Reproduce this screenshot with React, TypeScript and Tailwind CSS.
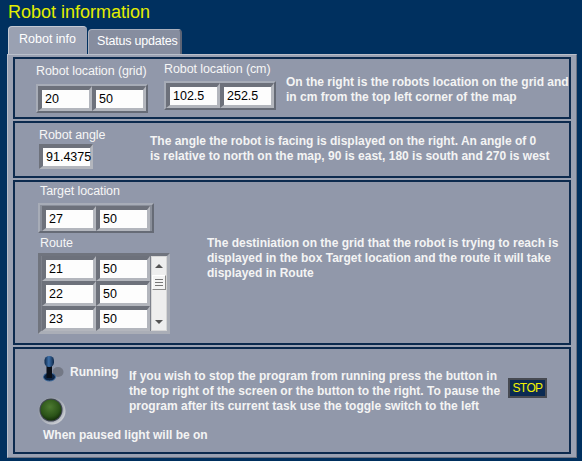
import React from "react";

// LabVIEW-ish front panel: "Robot information"

const NAVY = "bg-[#00305f]";

function Field({ value }: { value: string }) {
  return (
    <div className="border-t-4 border-l-4 border-r-[3px] border-b-[3px] border-t-[#6d717b] border-l-[#6d717b] border-r-[#b3b6bd] border-b-[#b3b6bd]">
      <div className="w-[47px] h-[18px] bg-[#fdfdfd] pl-[3px] text-[12.5px] leading-[18px] text-black">
        {value}
      </div>
    </div>
  );
}

function Cluster({ a, b, className = "" }: { a: string; b: string; className?: string }) {
  return (
    <div
      className={`flex w-fit border-2 border-t-[#a7acb7] border-l-[#a7acb7] border-r-[#666b76] border-b-[#666b76] bg-[#8a8f9a] ${className}`}
    >
      <Field value={a} />
      <Field value={b} />
    </div>
  );
}

function Label({ children, className = "" }: { children: React.ReactNode; className?: string }) {
  return <div className={`text-[12.5px] leading-[15px] tracking-[-0.1px] text-[#f6f6f6] ${className}`}>{children}</div>;
}

function Note({ children, className = "" }: { children: React.ReactNode; className?: string }) {
  return <p className={`text-[12px] leading-[15px] font-bold text-[#f4f4f4] ${className}`}>{children}</p>;
}

function Scrollbar() {
  return (
    <div className="flex h-[75px] w-[16px] flex-col items-center border border-[#d6d6d6] bg-[#eeeeee]">
      <svg width="8" height="5" viewBox="0 0 8 5" className="mt-[7px]">
        <path d="M0 4 L4 0 L8 4 Z" fill="#555" />
      </svg>
      <div className="mt-[6px] flex h-[15px] w-[14px] flex-col items-center justify-center gap-[2px] border border-t-white border-l-white border-r-[#8a8a8a] border-b-[#8a8a8a] bg-[#f4f4f4]">
        <div className="h-px w-[8px] bg-[#777]" />
        <div className="h-px w-[8px] bg-[#777]" />
        <div className="h-px w-[8px] bg-[#777]" />
      </div>
      <svg width="8" height="5" viewBox="0 0 8 5" className="mt-auto mb-[6px]">
        <path d="M0 1 L8 1 L4 5 Z" fill="#555" />
      </svg>
    </div>
  );
}

function Toggle() {
  return (
    <svg width="21" height="27" viewBox="0 0 21 27">
      <defs>
        <linearGradient id="knob" x1="0" y1="0" x2="1" y2="0">
          <stop offset="0" stopColor="#0d2748" />
          <stop offset="0.45" stopColor="#3d6fa8" />
          <stop offset="1" stopColor="#0d2748" />
        </linearGradient>
      </defs>
      <ellipse cx="15" cy="17" rx="5.5" ry="5" fill="#6c717c" opacity="0.8" />
      <ellipse cx="6.5" cy="22" rx="6" ry="4" fill="#0c2444" stroke="#3e6a9c" strokeWidth="1" />
      <rect x="3.5" y="10" width="5.5" height="13" fill="#0a0f18" />
      <rect x="1.5" y="1" width="9.5" height="11" rx="4.5" fill="url(#knob)" />
    </svg>
  );
}

function Led() {
  return (
    <svg width="28" height="28" viewBox="0 0 28 28">
      <defs>
        <radialGradient id="ring" cx="0.4" cy="0.4" r="0.6">
          <stop offset="0.75" stopColor="#9aa0ab" />
          <stop offset="1" stopColor="#c9ccd2" />
        </radialGradient>
        <radialGradient id="lamp" cx="0.45" cy="0.35" r="0.65">
          <stop offset="0" stopColor="#4d7a31" />
          <stop offset="0.7" stopColor="#2b5418" />
          <stop offset="1" stopColor="#15300b" />
        </radialGradient>
      </defs>
      <circle cx="14" cy="14" r="13.5" fill="url(#ring)" />
      <circle cx="13" cy="13" r="11.5" fill="#3f4550" />
      <circle cx="13" cy="13" r="10.5" fill="url(#lamp)" />
    </svg>
  );
}

export default function App() {
  return (
    <div className={`h-[461px] w-[582px] overflow-hidden ${NAVY} font-['Liberation_Sans',Arial,sans-serif] text-white`}>
      <h1 className="h-[26px] pl-[8px] pt-[1px] text-[18px] leading-[22px] text-[#e2ee00]">Robot information</h1>

      {/* Tabs */}
      <div className="flex h-[28px] items-end pl-[8px]">
        <div className="h-[28px] w-[79px] whitespace-nowrap rounded-t-[4px] border-t border-l border-[#c4c9d3] bg-[#9aa1b2] pl-[10px] pt-[4px] text-[12.5px] leading-[16px]">
          Robot info
        </div>
        <div className="ml-px h-[25px] w-[94px] whitespace-nowrap rounded-t-[4px] border-t border-l border-r-2 border-t-[#aab0bd] border-l-[#aab0bd] border-r-[#5d6475] bg-[#868d9f] pl-[8px] pt-[3px] text-[12.5px] leading-[16px] tracking-[-0.2px]">
          Status updates
        </div>
      </div>

      {/* Tab page */}
      <div className="ml-[7px] flex h-[404px] w-[570px] flex-col gap-[2px] border border-t-[#b9bfcb] border-l-[#b9bfcb] border-r-[#6c7384] border-b-[#6c7384] bg-[#9aa1b2] px-[5px] pt-[2px] pb-[3px]">
        {/* Location */}
        <section className="flex h-[62px] border-2 border-[#0c2a4e] bg-[#9198aa] pl-[21px]">
          <div className="pt-[5px]">
            <Label>Robot location (grid)</Label>
            <Cluster a="20" b="50" className="mt-[5px]" />
          </div>
          <div className="ml-[16px] pt-[3px]">
            <Label>Robot location (cm)</Label>
            <Cluster a="102.5" b="252.5" className="mt-[4px]" />
          </div>
          <Note className="ml-[10px] mt-[16px]">
            On the right is the robots location on the grid and
            <br />
            in cm from the top left corner of the map
          </Note>
        </section>

        {/* Angle */}
        <section className="flex h-[57px] border-2 border-[#0c2a4e] bg-[#9198aa]">
          <div className="w-[135px] pl-[24px] pt-[5px]">
            <Label>Robot angle</Label>
            <div className="mt-px w-fit">
              <Field value="91.4375" />
            </div>
          </div>
          <Note className="mt-[11px]">
            The angle the robot is facing is displayed on the right. An angle of 0
            <br />
            is relative to north on the map, 90 is east, 180 is south and 270 is west
          </Note>
        </section>

        {/* Target + route */}
        <section className="flex h-[165px] border-2 border-[#0c2a4e] bg-[#9198aa]">
          <div className="w-[192px] pl-[23px] pt-[2px]">
            <Label className="pl-[2px]">Target location</Label>
            <Cluster a="27" b="50" className="mt-[4px] px-[2px] pt-px" />
            <Label className="mt-[3px] pl-[2px]">Route</Label>
            <div className="mt-[2px] flex w-fit border-[3px] border-t-[#70747e] border-l-[#70747e] border-r-[#aaaeb7] border-b-[#aaaeb7] bg-[#8a8f9a]">
              <div className="flex flex-col">
                {[
                  ["21", "50"],
                  ["22", "50"],
                  ["23", "50"],
                ].map(([a, b]) => (
                  <div key={a} className="flex border-x border-[#7d818b]">
                    <Field value={a} />
                    <Field value={b} />
                  </div>
                ))}
              </div>
              <Scrollbar />
            </div>
          </div>
          <Note className="mt-[54px]">
            The destiniation on the grid that the robot is trying to reach is
            <br />
            displayed in the box Target location and the route it will take
            <br />
            displayed in Route
          </Note>
        </section>

        {/* Running */}
        <section className="flex h-[107px] flex-col border-2 border-[#0c2a4e] bg-[#9198aa]">
          <div className="flex">
            <div className="w-[114px] pl-[23px] pt-[6px]">
              <div className="flex items-start pl-[5px]">
                <Toggle />
                <Note className="ml-[6px] mt-[10px]">Running</Note>
              </div>
              <div className="mt-[15px]">
                <Led />
              </div>
            </div>
            <Note className="mt-[20px] w-[379px]">
              If you wish to stop the program from running press the button in
              <br />
              the top right of the screen or the button to the right. To pause the
              <br />
              program after its current task use the toggle switch to the left
            </Note>
            <button className="mt-[29px] flex h-[20px] w-[39px] items-center justify-center border-2 border-[#474a52] bg-[#0b2a52] text-[12px] leading-none tracking-[-0.6px] text-[#f2f200]">
              STOP
            </button>
          </div>
          <Note className="mt-[3px] pl-[28px]">When paused light will be on</Note>
        </section>
      </div>
    </div>
  );
}
